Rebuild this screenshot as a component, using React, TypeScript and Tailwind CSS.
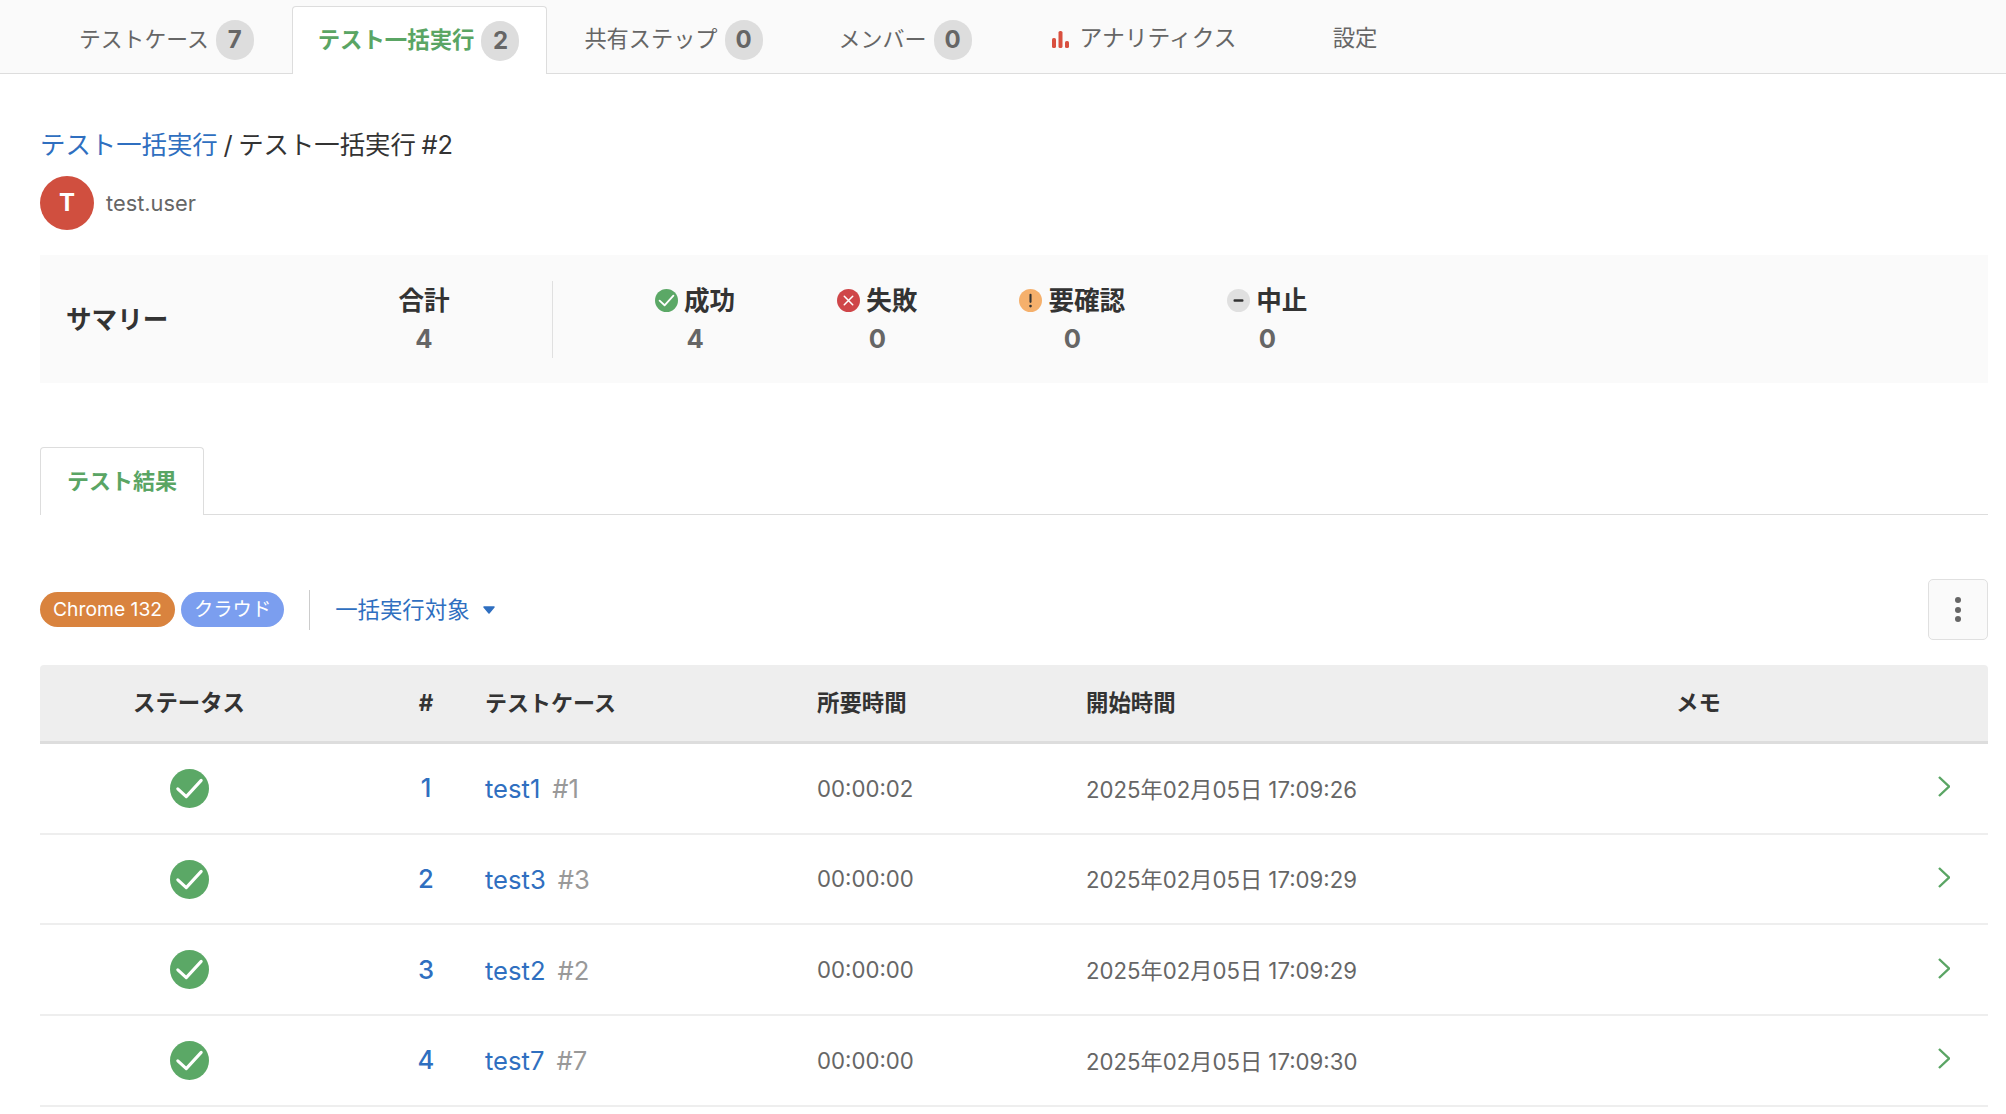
import React from 'react';

const tabs = [
  { label: 'テストケース', count: 7, cls: 'ml-0 pl-[28px] pr-[28px] text-[21.8px]' },
  { label: 'テスト一括実行', count: 2, cls: 'ml-[10px] pl-[25px] pr-[27px] text-[22.4px]', active: true },
  { label: '共有ステップ', count: 0, cls: 'ml-[9px] pl-[28px] pr-[28px] text-[22.2px]' },
  { label: 'メンバー', count: 0, cls: 'ml-[20px] pl-[28px] pr-[28px] text-[22px]' },
];

const rows = [
  { no: 1, name: 'test1', id: '#1', time: '00:00:02', start: '2025年02月05日 17:09:26' },
  { no: 2, name: 'test3', id: '#3', time: '00:00:00', start: '2025年02月05日 17:09:29' },
  { no: 3, name: 'test2', id: '#2', time: '00:00:00', start: '2025年02月05日 17:09:29' },
  { no: 4, name: 'test7', id: '#7', time: '00:00:00', start: '2025年02月05日 17:09:30' },
];

const gridCols = 'grid grid-cols-[298px_128px_331px_269px_592px_260px_70px] items-center';

const CheckCircle: React.FC<{ size: string }> = ({ size }) => (
  <svg viewBox="0 0 24 24" className={size}>
    <circle cx="12" cy="12" r="12" fill="#5ba866" />
    <path d="M4.8 12.2l5.2 4.8 9.2-10" fill="none" stroke="#fff" strokeWidth="1.9" strokeLinecap="round" strokeLinejoin="round" />
  </svg>
);

const FailIcon = () => (
  <svg viewBox="0 0 24 24" className="w-[23px] h-[23px]">
    <circle cx="12" cy="12" r="12" fill="#cf4649" />
    <path d="M7.6 7.6l8.8 8.8M16.4 7.6l-8.8 8.8" stroke="#fff" strokeWidth="1.6" strokeLinecap="round" />
  </svg>
);

const WarnIcon = () => (
  <svg viewBox="0 0 24 24" className="w-[23px] h-[23px]">
    <circle cx="12" cy="12" r="12" fill="#f5b06c" />
    <rect x="10.9" y="5" width="2.2" height="9.5" rx="1.1" fill="#333" />
    <circle cx="12" cy="17.8" r="1.4" fill="#333" />
  </svg>
);

const StopIcon = () => (
  <svg viewBox="0 0 24 24" className="w-[23px] h-[23px]">
    <circle cx="12" cy="12" r="12" fill="#e0e0e0" />
    <rect x="6.8" y="10.8" width="10.4" height="2.4" rx="1" fill="#333" />
  </svg>
);

const Stat: React.FC<{ icon: React.ReactNode; label: string; value: number }> = ({ icon, label, value }) => (
  <div className="flex flex-col items-center gap-[4px]">
    <div className="flex items-center gap-[6px] h-[36px] pt-[2px] text-[25.6px] font-bold text-[#333]">
      <span className="-mt-[2px] flex">{icon}</span>
      <span>{label}</span>
    </div>
    <div className="h-[34px] leading-[34px] text-[25.6px] font-bold text-[#666]">{value}</div>
  </div>
);

export default function App() {
  return (
    <div className="min-h-[1114px] bg-white font-['Inter','Noto_Sans_CJK_JP',sans-serif] text-[#333]">
      {/* Top tabs */}
      <nav className="flex h-[74px] items-end bg-[#fafafa] border-b border-[#ddd] pl-[51px]">
        {tabs.map((t) => (
          <div
            key={t.label}
            className={`${t.cls} flex items-center gap-[7px] h-[68px] -mb-px ${
              t.active
                ? 'bg-white border border-b-0 border-[#ddd] rounded-t-[4px] text-[#5aa564] font-bold'
                : 'text-[#666]'
            }`}
          >
            <span className="-mt-[2px]">{t.label}</span>
            <span className="flex items-center justify-center w-[38px] h-[40px] rounded-full bg-[#ddd] text-[24px] font-bold text-[#666]">
              {t.count}
            </span>
          </div>
        ))}
        <div className="ml-[52px] flex items-center gap-[11px] h-[68px] text-[22.8px] text-[#666]">
          <svg viewBox="0 0 17 17" className="w-[17px] h-[17px]">
            <rect x="0" y="7" width="4" height="10" rx="1.6" fill="#d9503f" />
            <rect x="6.5" y="0" width="4" height="17" rx="1.6" fill="#d9503f" />
            <rect x="13" y="10" width="4" height="7" rx="1.6" fill="#d9503f" />
          </svg>
          <span className="-mt-[2px]">アナリティクス</span>
        </div>
        <div className="ml-[96px] flex items-center h-[68px] text-[22.4px] text-[#666]">
          <span className="-mt-[2px]">設定</span>
        </div>
      </nav>

      <main className="pl-[40px] pr-[18px]">
        {/* Breadcrumb */}
        <div className="mt-[51px] h-[40px] leading-[40px] text-[25.4px] [word-spacing:-1.5px]">
          <span className="text-[#2f6fc0]">テスト一括実行</span>
          <span> / テスト一括実行 #2</span>
        </div>

        {/* User */}
        <div className="mt-[11px] flex items-center gap-[12px]">
          <div className="flex items-center justify-center w-[54px] h-[54px] rounded-full bg-[#d04f3f] text-white text-[24px] font-bold">
            T
          </div>
          <span className="text-[21.8px] text-[#666]">test.user</span>
        </div>

        {/* Summary */}
        <section className="mt-[25px] h-[128px] bg-[#fafafa] flex items-center">
          <div className="w-[256px] pl-[26px] pt-[2px] text-[25.6px] font-bold">サマリー</div>
          <div className="w-[256px] flex flex-col items-center gap-[4px]">
            <div className="h-[36px] pt-[2px] flex items-center text-[25.6px] font-bold">合計</div>
            <div className="h-[34px] leading-[34px] text-[25.6px] font-bold text-[#666]">4</div>
          </div>
          <div className="w-px h-[77px] bg-[#e0e0e0]" />
          <div className="ml-[102px] flex gap-[102px]">
            <Stat icon={<CheckCircle size="w-[23px] h-[23px]" />} label="成功" value={4} />
            <Stat icon={<FailIcon />} label="失敗" value={0} />
            <Stat icon={<WarnIcon />} label="要確認" value={0} />
            <Stat icon={<StopIcon />} label="中止" value={0} />
          </div>
        </section>

        {/* Result tab */}
        <div className="mt-[64px] h-[68px] border-b border-[#ddd]">
          <div className="w-[164px] h-[68px] flex items-center justify-center bg-white border border-b-0 border-[#ddd] rounded-t-[4px] text-[22px] font-bold text-[#5aa564]">
            テスト結果
          </div>
        </div>

        {/* Toolbar */}
        <div className="mt-[64px] h-[61px] flex items-center justify-between">
          <div className="flex items-center">
            <span className="flex items-center h-[35px] px-[13px] rounded-full bg-[#d9833e] text-white text-[19.3px]">Chrome 132</span>
            <span className="ml-[6px] flex items-center h-[35px] px-[13px] rounded-full bg-[#7b9eef] text-white text-[19.3px]">クラウド</span>
            <span className="ml-[25px] w-px h-[40px] bg-[#ccc]" />
            <span className="ml-[25px] text-[22.4px] text-[#2f6fc0]">一括実行対象</span>
            <svg viewBox="0 0 12 8" className="ml-[13px] w-[12px] h-[8px]">
              <path d="M1 1h10L6 7z" fill="#2f6fc0" stroke="#2f6fc0" strokeWidth="1.5" strokeLinejoin="round" />
            </svg>
          </div>
          <button className="flex flex-col items-center justify-center gap-[3.5px] w-[60px] h-[61px] bg-[#fafafa] border border-[#e0e0e0] rounded-[5px]">
            <span className="w-[6px] h-[6px] rounded-full bg-[#666]" />
            <span className="w-[6px] h-[6px] rounded-full bg-[#666]" />
            <span className="w-[6px] h-[6px] rounded-full bg-[#666]" />
          </button>
        </div>

        {/* Table */}
        <div className={`${gridCols} mt-[25px] h-[79px] bg-[#eee] border-b-[3px] border-[#ddd] rounded-t-[4px] text-[22.4px] font-bold`}>
          <div className="text-center">ステータス</div>
          <div className="pl-[48px] text-center">#</div>
          <div className="pl-[19px] text-[22px]">テストケース</div>
          <div className="pl-[20px]">所要時間</div>
          <div className="pl-[20px]">開始時間</div>
          <div className="pl-[18px]">メモ</div>
          <div />
        </div>
        {rows.map((r) => (
          <div key={r.no} className={`${gridCols} h-[90.7px] border-b-2 border-[#eee] text-[22.2px]`}>
            <div className="flex justify-center">
              <CheckCircle size="w-[39px] h-[39px]" />
            </div>
            <div className="pl-[48px] text-center text-[25.6px] font-medium text-[#2f6fc0]">{r.no}</div>
            <div className="pl-[19px] pt-[2px] text-[25.6px]">
              <span className="text-[#2f6fc0]">{r.name}</span>
              <span className="ml-[12px] text-[#999]">{r.id}</span>
            </div>
            <div className="pl-[20px] text-[#666]">{r.time}</div>
            <div className="pl-[20px] pt-[2px] text-[#666]">{r.start}</div>
            <div />
            <div className="pl-[20px] pb-[3px]">
              <svg viewBox="0 0 12 21" className="w-[12px] h-[21px]">
                <path d="M1 1l10 9.5L1 20" fill="none" stroke="#5aa564" strokeWidth="2.4" />
              </svg>
            </div>
          </div>
        ))}
      </main>
    </div>
  );
}
